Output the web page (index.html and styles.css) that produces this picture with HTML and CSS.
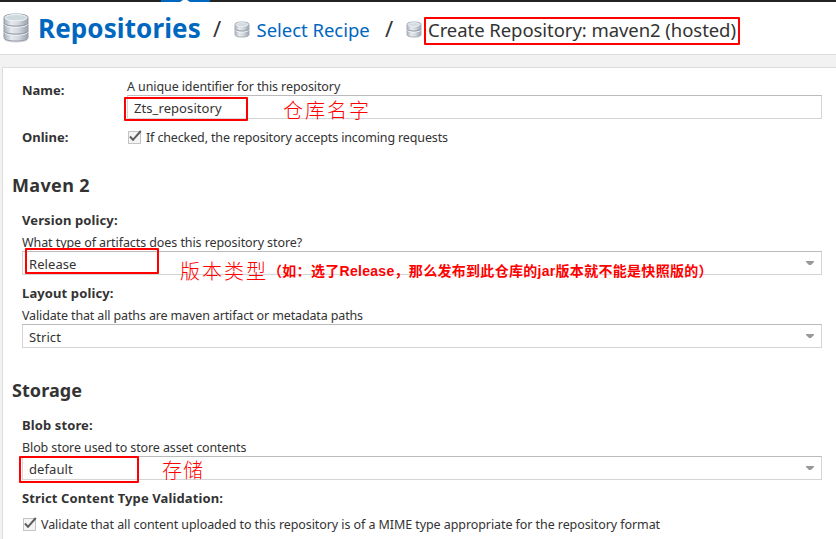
FILE: index.html
```html
<!DOCTYPE html>
<html lang="en">
<head>
<meta charset="utf-8">
<title>Create Repository</title>
<link rel="stylesheet" href="styles.css">
</head>
<body>
<svg class="defs" width="0" height="0">
  <defs>
    <linearGradient id="metal" x1="0" x2="1" y1="0" y2="0">
      <stop offset="0" stop-color="#a9b0ba"/><stop offset=".3" stop-color="#e6e9ed"/><stop offset=".6" stop-color="#d3d8df"/><stop offset="1" stop-color="#9aa2ae"/>
    </linearGradient>
    <symbol id="db-large" viewBox="0 0 26 30">
      <ellipse cx="13" cy="26.500" rx="12" ry="3" fill="#d8d8d8"/>
      <path d="M1 4.500C1 2 6 1 13 1s12 1 12 3.500V24.500C25 27 20 28 13 28S1 27 1 24.500Z" fill="url(#metal)" stroke="#959da8"/>
      <ellipse cx="13" cy="4.700" rx="11" ry="3.200" fill="#ced9df" stroke="#f1f4f6"/>
      <path d="M1.500 11.500C3 15 23 15 24.500 11.500M1.500 19.500C3 23 23 23 24.500 19.500" fill="none" stroke="#f8f9fa"/>
      <path d="M1.500 10.500C3 14 23 14 24.500 10.500M1.500 18.500C3 22 23 22 24.500 18.500" fill="none" stroke="#8c95a1"/>
    </symbol>
    <symbol id="db-small" viewBox="0 0 16 17">
      <path d="M1 3.500C1 1.600 4 1 8 1s7 .6 7 2.500V13.500C15 15.400 12 16 8 16S1 15.400 1 13.500Z" fill="url(#metal)" stroke="#a9b1ba"/>
      <ellipse cx="8" cy="3.600" rx="6" ry="1.900" fill="#d3dce2" stroke="#eef1f3" stroke-width=".8"/>
      <path d="M1.500 9.300C3 11.600 13 11.600 14.500 9.300" fill="none" stroke="#fafbfb"/>
      <path d="M1.500 8.300C3 10.600 13 10.600 14.500 8.300" fill="none" stroke="#959daa"/>
    </symbol>
    <symbol id="check" viewBox="0 0 15 15">
      <rect x="1.500" y="2.500" width="12" height="12" fill="#f4f4f4" stroke="#c4c4c4"/>
      <path d="M3 7.500L6 10.800L13.800 2" fill="none" stroke="#5c5c5c" stroke-width="2"/>
    </symbol>
    <symbol id="caret" viewBox="0 0 8 4"><path d="M0 0H8V1L5 4H3L0 1Z" fill="#999"/></symbol>
  </defs>
</svg>
<div class="topbar"><span class="tab"><i class="notch"></i></span></div>
<header class="crumbs">
  <svg class="icon-lg"><use href="#db-large"/></svg>
  <h1>Repositories</h1>
  <span class="sep">/</span>
  <svg class="icon-sm"><use href="#db-small"/></svg>
  <a class="crumb-link">Select Recipe</a>
  <span class="sep">/</span>
  <svg class="icon-sm"><use href="#db-small"/></svg>
  <span class="crumb-now">Create Repository: maven2 (hosted)<i class="mark mark-title"></i></span>
</header>
<main class="panel">
  <div class="row row-name">
    <label class="lbl">Name:</label>
    <div class="grow">
      <p class="help">A unique identifier for this repository</p>
      <div class="field">Zts_repository<i class="mark mark-name"></i><span class="note note-name">仓库名字</span></div>
    </div>
  </div>
  <div class="row row-online">
    <label class="lbl">Online:</label>
    <svg class="check"><use href="#check"/></svg>
    <span class="help t-if">If checked, the repository accepts incoming requests</span>
  </div>
  <h2 class="h-maven">Maven 2</h2>
  <section class="group">
    <h3>Version policy:</h3>
    <p class="help t-what">What type of artifacts does this repository store?</p>
    <div class="field select"><span>Release</span><svg class="caret"><use href="#caret"/></svg><i class="mark mark-release"></i><span class="note note-version">版本类型</span><span class="note-detail">（如：选了Release，那么发布到此仓库的jar版本就不能是快照版的）</span></div>
    <h3>Layout policy:</h3>
    <p class="help t-paths">Validate that all paths are maven artifact or metadata paths</p>
    <div class="field select"><span>Strict</span><svg class="caret"><use href="#caret"/></svg></div>
  </section>
  <h2 class="h-storage">Storage</h2>
  <section class="group">
    <h3>Blob store:</h3>
    <p class="help">Blob store used to store asset contents</p>
    <div class="field select"><span>default</span><svg class="caret"><use href="#caret"/></svg><i class="mark mark-default"></i><span class="note note-storage">存储</span></div>
    <h3>Strict Content Type Validation:</h3>
    <div class="row row-check"><svg class="check"><use href="#check"/></svg><span class="help t-mime">Validate that all content uploaded to this repository is of a MIME type appropriate for the repository format</span></div>
  </section>
</main>
</body>
</html>
```
FILE: styles.css
```css
* { box-sizing: border-box; }
html, body { height: 539px; overflow: hidden; }
body { margin: 0; display: flex; flex-direction: column; background: #f2f2f2; color: #333; font: 13px/16px "Noto Sans", "Noto Sans CJK SC", sans-serif; }
h1, h2, h3, p { margin: 0; }
.defs { position: absolute; }

.topbar { height: 2px; flex: none; background: #222; padding-left: 161px; }
.tab { display: block; width: 49px; height: 2px; background: #0067c0; padding-left: 19px; }
.notch { display: block; width: 10px; height: 2px; background: #fff; clip-path: polygon(3px 0, 7px 0, 100% 100%, 0 100%); }

.crumbs { height: 53px; flex: none; display: flex; align-items: center; background: #fff; border-bottom: 1px solid #ddd; padding-left: 3px; font-size: 18.5px; white-space: nowrap; }
.icon-lg { width: 26px; height: 30px; margin-right: 9px; flex: none; }
.icon-sm { width: 16px; height: 17px; flex: none; margin-top: 2px; }
h1 { font-size: 26px; line-height: 36px; letter-spacing: .1px; width: 175px; color: #0067c0; flex: none; }
.sep { font-size: 22px; width: 21px; flex: none; }
.crumb-link { color: #0067c0; letter-spacing: -.03px; line-height: 30px; padding-top: 4px; margin-left: 6.5px; width: 128.5px; flex: none; }
.crumb-now { position: relative; letter-spacing: -.06px; line-height: 30px; padding-top: 4px; margin-left: 6px; }

.panel { flex: 1; margin: 12px 0 0 2px; border: solid #ddd; border-width: 1px 0 0 1px; background: #fff; padding: 10px 14px 0 9px; min-height: 0; }
.row { display: flex; }
.row-name { padding-left: 10px; height: 41px; }
.lbl { width: 105px; flex: none; font-weight: 700; }
.row-name .lbl { padding-top: 4px; }
.grow { flex: 1; }
.help { font-size: 12.5px; line-height: 17px; letter-spacing: -.1px; white-space: nowrap; }
.t-if, .t-paths { letter-spacing: -.135px; }
.t-what { letter-spacing: -.08px; }
.t-mime { letter-spacing: -.077px; }
.field { position: relative; height: 24px; border: 1px solid #d5d5d5; border-top-color: #bbb; padding-left: 6px; line-height: 24px; letter-spacing: .08px; }
.select { display: flex; justify-content: space-between; padding-right: 7px; }
.caret { width: 8px; height: 4px; margin-top: 9px; }
.row-online { padding: 10px 0 0 10px; height: 54px; }
.check { width: 15px; height: 15px; margin-right: 4px; flex: none; }
.row-check { padding-top: 4px; }

h2 { font-size: 18px; line-height: 24px; margin-bottom: 5px; }
.h-maven { letter-spacing: .36px; }
.h-storage { letter-spacing: .06px; margin-top: 30px; }
.group { padding-left: 10px; }
h3 { font-size: 13px; line-height: 18px; padding: 9px 0 5px; letter-spacing: .11px; }

/* Red annotations laid over the form */
.mark { position: absolute; border: 2px solid #f00; border-radius: 1px; }
.mark-title { left: -4px; top: 6px; width: 316px; height: 28px; }
.mark-name { left: -4px; top: 1px; width: 124px; height: 24px; }
.mark-release { left: 2px; top: -4px; width: 134px; height: 26px; }
.mark-default { left: -4px; top: -1px; width: 120px; height: 27px; }
.note { position: absolute; color: #f00; font-size: 20px; font-weight: 300; letter-spacing: 2px; white-space: nowrap; }
.note-name { left: 155px; top: 3px; }
.note-version { left: 157px; top: 8px; }
.note-storage { left: 139px; top: 2px; letter-spacing: 1px; }
.note-detail { position: absolute; left: 245px; top: 7px; color: #f00; font: 700 14px/24px "Liberation Sans", "Noto Sans CJK SC", sans-serif; letter-spacing: .3px; white-space: nowrap; }
```
